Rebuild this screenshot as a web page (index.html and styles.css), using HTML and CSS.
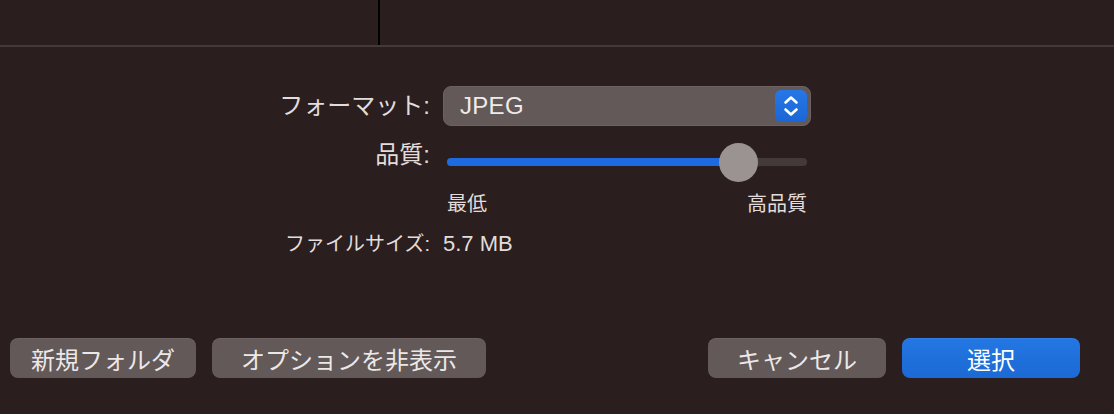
FILE: index.html
```html
<!DOCTYPE html>
<html lang="ja">
<head>
<meta charset="utf-8">
<title>書き出し</title>
<link rel="stylesheet" href="styles.css">
</head>
<body>
<div class="window">
  <div class="topbar"><div class="splitter"></div></div>

  <div class="form">
    <div class="label label-format">フォーマット:</div>
    <div class="popup">
      <span class="popup-text">JPEG</span>
      <span class="stepper">
        <svg width="32" height="32" viewBox="0 0 32 32" fill="none" stroke="#ffffff" stroke-width="2.6" stroke-linecap="round" stroke-linejoin="round">
          <polyline points="10.5,12.5 16,7.5 21.5,12.5"/>
          <polyline points="10.5,19.5 16,24.5 21.5,19.5"/>
        </svg>
      </span>
    </div>

    <div class="label label-quality">品質:</div>
    <div class="slider">
      <div class="track">
        <div class="fill" style="width: 81.1%"></div>
        <div class="knob" style="left: calc(81.1% - 19.5px)"></div>
      </div>
    </div>

    <div></div>
    <div class="ticks">
      <span>最低</span>
      <span>高品質</span>
    </div>

    <div class="label label-size">ファイルサイズ:</div>
    <div class="value">5.7 MB</div>
  </div>

  <div class="buttons">
    <div class="group">
      <button class="btn btn-folder">新規フォルダ</button>
      <button class="btn btn-options">オプションを非表示</button>
    </div>
    <div class="group">
      <button class="btn btn-fixed">キャンセル</button>
      <button class="btn btn-fixed btn-primary">選択</button>
    </div>
  </div>
</div>
</body>
</html>
```

FILE: styles.css
```css
html, body {
  margin: 0;
  padding: 0;
  background: #2a1f1e;
}

body {
  font-family: "Liberation Sans", "Noto Sans CJK JP", sans-serif;
  color: #e4dfde;
}

.window {
  width: 1114px;
  height: 414px;
  display: flex;
  flex-direction: column;
  overflow: hidden;
}

.topbar {
  height: 45px;
  border-bottom: 2px solid #433938;
  display: flex;
}

.splitter {
  width: 2px;
  margin-left: 378px;
  background: #000000;
}

.form {
  margin-top: 39px;
  display: grid;
  grid-template-columns: 430px 368px;
  column-gap: 13px;
  align-items: start;
}

.label {
  text-align: right;
  font-size: 24px;
  color: #e2dddc;
  white-space: nowrap;
}

.label-format {
  line-height: 40px;
}

.label-quality {
  margin-top: 16px;
  line-height: 26px;
}

.label-size {
  margin-top: 16px;
  font-size: 20px;
  line-height: 24px;
}

.popup {
  height: 40px;
  box-sizing: border-box;
  background: #625958;
  border: 1px solid #6b6261;
  border-radius: 8px;
  display: flex;
  align-items: center;
  justify-content: space-between;
  padding: 0 3px 0 16px;
}

.popup-text {
  font-size: 24px;
  color: #efebea;
  letter-spacing: 0.3px;
}

.stepper {
  width: 32px;
  height: 32px;
  border-radius: 6px;
  background: linear-gradient(#2677e6, #1b66d6);
  display: flex;
}

.slider {
  margin-top: 16px;
  height: 40px;
  display: flex;
  align-items: center;
  padding-left: 4px;
}

.track {
  position: relative;
  width: 360px;
  height: 8px;
  border-radius: 4px;
  background: #433a39;
}

.fill {
  height: 100%;
  border-radius: 4px;
  background: #1e6ae0;
}

.knob {
  position: absolute;
  top: -15.5px;
  width: 39px;
  height: 39px;
  border-radius: 50%;
  background: #9b9392;
}

.ticks {
  margin-top: 10px;
  margin-left: 4px;
  width: 360px;
  display: flex;
  justify-content: space-between;
  font-size: 20px;
  line-height: 24px;
  color: #e2dddc;
}

.value {
  margin-top: 16px;
  font-size: 22px;
  line-height: 24px;
  color: #e2dddc;
}

.buttons {
  margin-top: auto;
  margin-bottom: 36px;
  display: flex;
  justify-content: space-between;
  padding: 0 34px 0 10px;
}

.group {
  display: flex;
  gap: 16px;
}

.btn {
  height: 40px;
  border: none;
  border-radius: 8px;
  background: #625958;
  color: #ece8e7;
  font-family: "Liberation Sans", "Noto Sans CJK JP", sans-serif;
  font-size: 24px;
  padding: 0;
  box-shadow: inset 0 1px 0 rgba(255, 255, 255, 0.06);
}

.btn-folder {
  width: 186px;
}

.btn-options {
  width: 274px;
}

.btn-fixed {
  width: 178px;
}

.btn-primary {
  background: linear-gradient(#2477e3, #1b69d4);
  color: #ffffff;
}
```
